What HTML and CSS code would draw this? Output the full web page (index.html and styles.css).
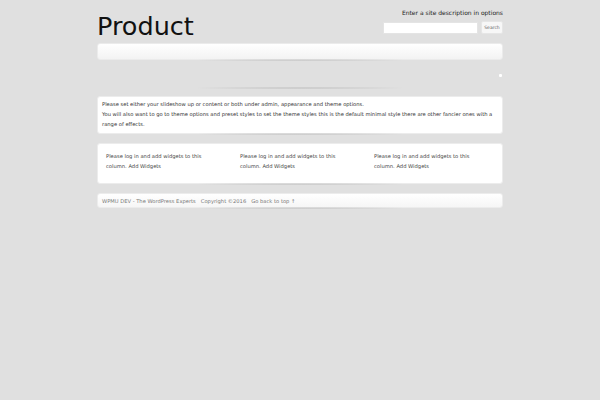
FILE: index.html
```html
<!DOCTYPE html>
<html lang="en">
<head>
  <meta charset="UTF-8" />
  <title>Product</title>
  <link rel="stylesheet" href="styles.css">
</head>
<body>
  <div class="wrap">
    <header class="top">
      <div class="site-title">Product</div>
      <div class="top-right">
        <div class="desc">Enter a site description in options</div>
        <form class="search">
          <input type="text" class="search-input" />
          <button type="button" class="search-btn">Search</button>
        </form>
      </div>
    </header>

    <nav class="navbar"></nav>

    <div class="slider">
      <span class="slider-dot"></span>
    </div>

    <section class="box content">
      <p>Please set either your slideshow up or content or both under admin, appearance and theme options.</p>
      <p>You will also want to go to theme options and preset styles to set the theme styles this is the default minimal style there are other fancier ones with a range of effects.</p>
    </section>

    <section class="box widgets">
      <div class="widget">Please log in and add widgets to this column. <a href="#">Add Widgets</a></div>
      <div class="widget">Please log in and add widgets to this column. <a href="#">Add Widgets</a></div>
      <div class="widget">Please log in and add widgets to this column. <a href="#">Add Widgets</a></div>
    </section>

    <footer class="box footer">
      <a href="#">WPMU DEV - The WordPress Experts</a>
      <span>Copyright &copy;2016</span>
      <a href="#">Go back to top &uarr;</a>
    </footer>
  </div>
</body>
</html>
```

FILE: styles.css
```css
body {
  margin: 0;
  background: #e0e0e0;
  font-family: 'DejaVu Sans', sans-serif;
  color: #333;
}

a {
  color: inherit;
  text-decoration: none;
}

.wrap {
  width: 406px;
  margin: 0 auto;
}

.top {
  display: flex;
  justify-content: space-between;
  height: 43px;
}

.site-title {
  font-size: 25.5px;
  color: #111;
  padding-top: 11px;
  line-height: 30px;
}

.top-right {
  display: flex;
  flex-direction: column;
  align-items: flex-end;
  padding-top: 9px;
}

.desc {
  font-size: 6px;
  color: #222;
  line-height: 8px;
}

.search {
  display: flex;
  gap: 3px;
  margin-top: 4px;
}

.search-input {
  width: 95px;
  height: 12px;
  box-sizing: border-box;
  border: 1px solid #e4e4e4;
  background: #fff;
  padding: 0;
  margin-top: 1px;
}

.search-btn {
  height: 13px;
  width: 22px;
  padding: 0;
  font-family: inherit;
  font-size: 4.5px;
  color: #666;
  background: #f7f7f7;
  border: 1px solid #e6e6e6;
  border-radius: 2px;
}

.navbar {
  height: 17px;
  box-sizing: border-box;
  background: linear-gradient(#ffffff, #f3f3f3);
  border: 1px solid #ebebeb;
  border-radius: 3px;
  position: relative;
}

.navbar::after,
.slider::after,
.box::after {
  content: "";
  position: absolute;
  left: 20%;
  right: 20%;
  bottom: -2px;
  height: 2px;
  background: radial-gradient(ellipse at center, rgba(0,0,0,0.16), rgba(0,0,0,0) 70%);
}

.slider {
  height: 30px;
  position: relative;
  margin-bottom: 6px;
}

.slider::after {
  bottom: 1px;
}

.slider-dot {
  position: absolute;
  right: 1px;
  top: 14px;
  width: 3px;
  height: 3px;
  background: #fff;
  border-radius: 1px;
}

.box {
  background: #fff;
  border: 1px solid #ececec;
  border-radius: 3px;
  position: relative;
  font-size: 5.2px;
  line-height: 10px;
  margin-bottom: 9px;
}

.content {
  padding: 2px 4px 4px;
  color: #333;
}

.content p {
  margin: 0;
}

.widgets {
  display: grid;
  grid-template-columns: repeat(3, 134px);
  padding: 7px 0 12px 8px;
  color: #444;
}

.widget {
  width: 100px;
}

.footer {
  display: flex;
  gap: 5px;
  padding: 2px 4px 1px;
  color: #777;
  background: linear-gradient(#ffffff, #f6f6f6);
}
```
